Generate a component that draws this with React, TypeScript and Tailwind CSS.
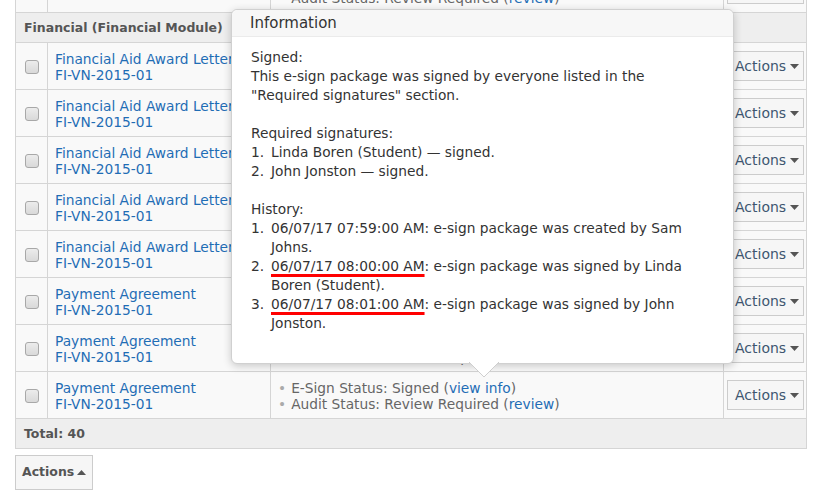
import React from "react";

const docs = [
  "Financial Aid Award Letter",
  "Financial Aid Award Letter",
  "Financial Aid Award Letter",
  "Financial Aid Award Letter",
  "Financial Aid Award Letter",
  "Payment Agreement",
  "Payment Agreement",
  "Payment Agreement",
];

const Checkbox = () => (
  <span className="inline-block w-[14px] h-[14px] rounded-[3px] border border-[#a8a8a8] bg-gradient-to-b from-[#ececec] to-[#d9d9d9] align-middle" />
);

const CaretDown = () => (
  <svg width="9" height="5" viewBox="0 0 9 5" className="ml-[4px]">
    <polygon points="0,0 9,0 4.5,5" fill="#555" />
  </svg>
);

const CaretUp = () => (
  <svg width="9" height="5" viewBox="0 0 9 5" className="ml-[3px]">
    <polygon points="0,5 9,5 4.5,0" fill="#555" />
  </svg>
);

const ActionsButton = () => (
  <button className="flex items-center h-[30px] w-[77px] pl-[7px] pt-[1px] border border-[#ccc] bg-[#f6f6f6] text-[#3e5670] text-[14px]">
    Actions
    <CaretDown />
  </button>
);

const Status = () => (
  <div className="text-[#666] leading-[16px] pt-[1px]">
    <div>
      <span className="text-[#aaa] mr-[5px]">•</span>E-Sign Status: Signed (
      <a className="text-[#1f6db5]">view info</a>)
    </div>
    <div>
      <span className="text-[#aaa] mr-[5px]">•</span>Audit Status: Review Required (
      <a className="text-[#1f6db5]">review</a>)
    </div>
  </div>
);

const Row = ({ name }: { name: string }) => (
  <tr className="h-[47px] bg-[#f9f9f9] border-b border-[#d5d5d5]">
    <td className="border-r border-[#d5d5d5] text-center align-middle">
      <Checkbox />
    </td>
    <td className="border-r border-[#d5d5d5] px-[7px] pt-[2px] align-middle leading-[16px] text-[#1f6db5] whitespace-nowrap overflow-hidden">
      {name && (
        <>
          <div>{name}</div>
          <div>FI-VN-2015-01</div>
        </>
      )}
    </td>
    <td className="border-r border-[#d5d5d5] px-[7px] align-middle">
      <Status />
    </td>
    <td className="px-[3px] align-middle">
      <ActionsButton />
    </td>
  </tr>
);

const Item = ({ n, children }: { n: number; children: React.ReactNode }) => (
  <div className="flex">
    <span className="w-[20px] shrink-0">{n}.</span>
    <span>{children}</span>
  </div>
);

const Mark = ({ children }: { children: React.ReactNode }) => (
  <span className="underline decoration-[#f00] decoration-[3px] underline-offset-[3px]">
    {children}
  </span>
);

const Popover = () => (
  <div className="absolute left-[231px] top-[9px] w-[503px] h-[355px] bg-white border border-[#d0d0d0] rounded-[6px] shadow-[0_2px_8px_rgba(0,0,0,0.2)] text-[#333]">
    <div className="h-[27px] px-[18px] flex items-center bg-[#f7f7f7] border-b border-[#ebebeb] rounded-t-[6px] text-[15px]">
      Information
    </div>
    <div className="pl-[19px] pr-[18px] pt-[11px] leading-[19px] text-[13.75px]">
      <div>Signed:</div>
      <div>This e-sign package was signed by everyone listed in the</div>
      <div>"Required signatures" section.</div>
      <div className="h-[19px]" />
      <div>Required signatures:</div>
      <Item n={1}>Linda Boren (Student) — signed.</Item>
      <Item n={2}>John Jonston — signed.</Item>
      <div className="h-[19px]" />
      <div>History:</div>
      <Item n={1}>06/07/17 07:59:00 AM: e-sign package was created by Sam Johns.</Item>
      <Item n={2}>
        <Mark>06/07/17 08:00:00 AM</Mark>: e-sign package was signed by Linda Boren (Student).
      </Item>
      <Item n={3}>
        <Mark>06/07/17 08:01:00 AM</Mark>: e-sign package was signed by John Jonston.
      </Item>
    </div>
    <svg
      width="30"
      height="16"
      viewBox="0 0 30 16"
      className="absolute left-[237px] bottom-[-15px]"
    >
      <polygon points="0,0 30,0 15,15" fill="#fff" />
      <polyline points="0,0 15,15 30,0" fill="none" stroke="#cfcfcf" strokeWidth="1" />
    </svg>
  </div>
);

export default function App() {
  return (
    <div className="relative w-[820px] h-[494px] overflow-hidden bg-white font-['DejaVu_Sans',Verdana,sans-serif] text-[13.75px]">
      <div className="pl-[15px] -mt-[35px]">
        <table className="table-fixed w-[791px] border-collapse border border-[#d5d5d5]">
          <colgroup>
            <col className="w-[32px]" />
            <col className="w-[223px]" />
            <col className="w-[453px]" />
            <col className="w-[83px]" />
          </colgroup>
          <tbody>
            <Row name="" />
            <tr className="h-[30px] bg-[#eee] border-b border-[#d5d5d5]">
              <td colSpan={4} className="px-[8px] pt-[1px] font-bold text-[12.5px] text-[#555]">
                Financial (Financial Module)
              </td>
            </tr>
            {docs.map((d, i) => (
              <Row key={i} name={d} />
            ))}
            <tr className="h-[30px] bg-[#eee]">
              <td colSpan={4} className="px-[8px] pt-[1px] font-bold text-[12.5px] text-[#555]">
                Total: 40
              </td>
            </tr>
          </tbody>
        </table>
        <button className="mt-[6px] flex items-center h-[35px] w-[78px] pl-[6px] border border-[#ccc] bg-[#f6f6f6] text-[#555] font-bold text-[12.5px]">
          Actions
          <CaretUp />
        </button>
      </div>
      <Popover />
    </div>
  );
}
